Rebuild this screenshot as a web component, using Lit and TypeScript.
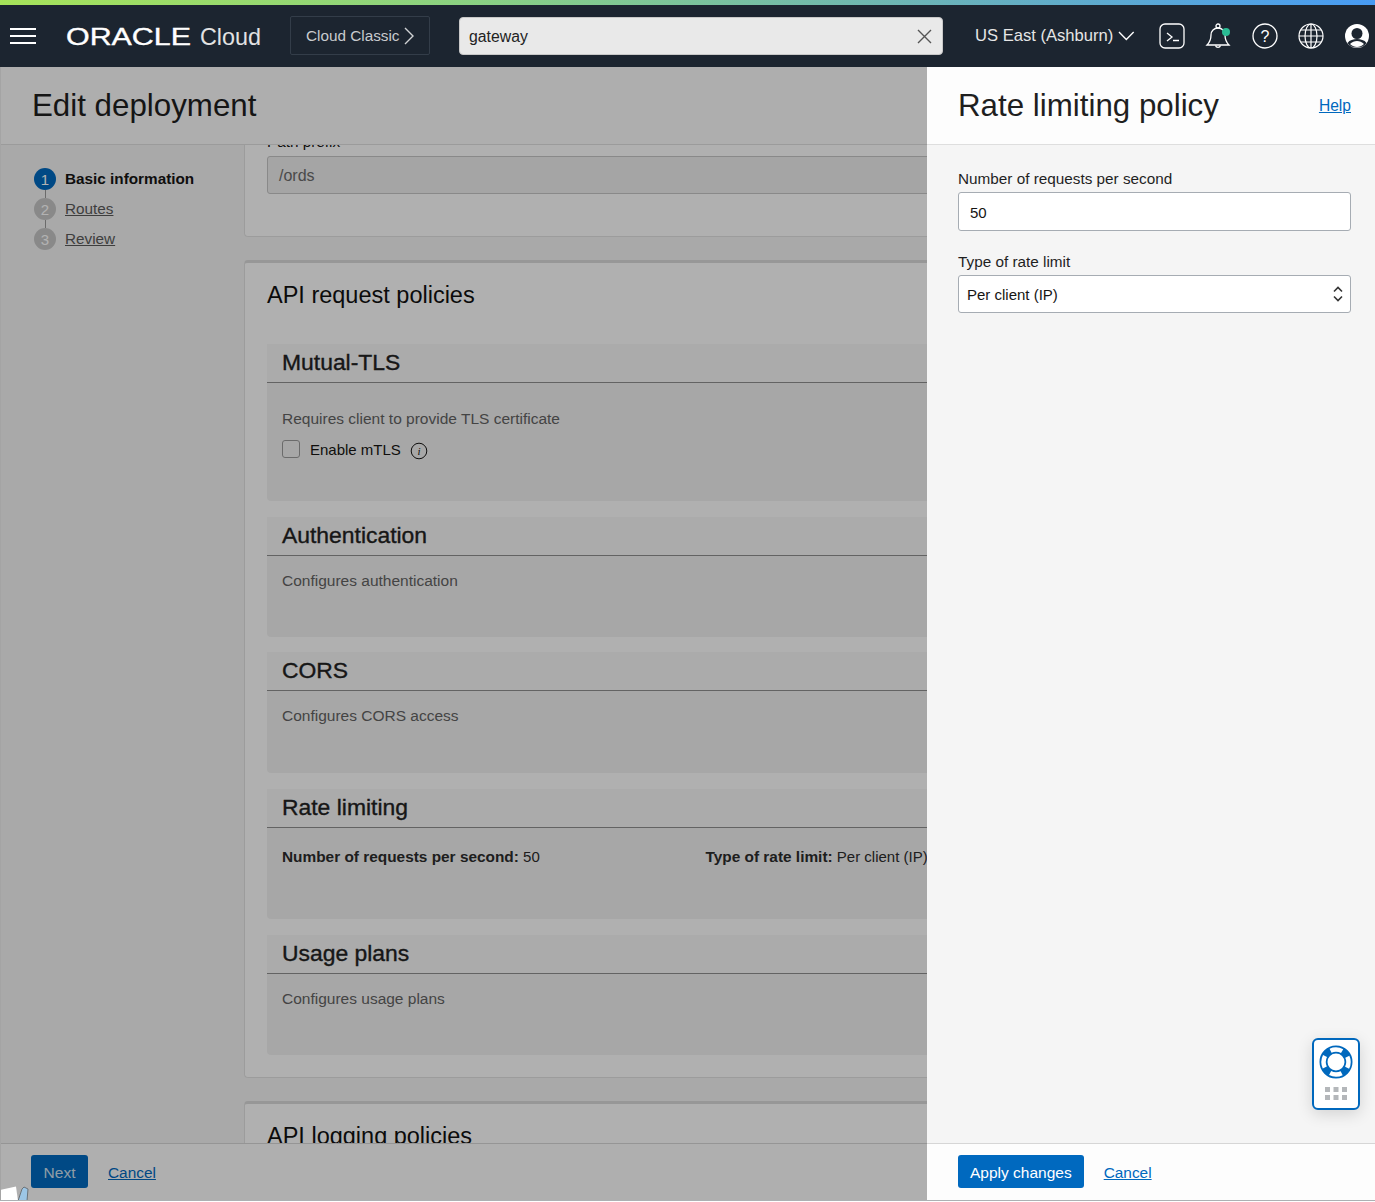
import { LitElement, css, html } from "lit";
import { customElement } from "lit/decorators.js";

const FONT = css`"Liberation Sans", Arial, sans-serif`;

const sections = [
  { title: "Authentication", text: "Configures authentication", cls: "" },
  { title: "CORS", text: "Configures CORS access", cls: "tall" },
];

@customElement("app-root")
export class AppRoot extends LitElement {
  static styles = css`
    :host {
      display: block;
      width: 1375px;
      height: 1202px;
      overflow: hidden;
      font-family: ${FONT};
      font-size: 15.3px;
      color: #161513;
      background: #fff;
    }
    * {
      box-sizing: border-box;
    }
    a {
      color: #0068bd;
      text-decoration: underline;
    }

    /* top bar */
    .stripe {
      height: 5px;
      background: linear-gradient(90deg, #a6e35a 0%, #8ad183 35%, #6db5b5 66%, #479bf4 100%);
    }
    .topbar {
      height: 62px;
      background: #1c2530;
      display: flex;
      align-items: center;
      color: #e6e6e6;
    }
    .burger {
      width: 26px;
      height: 16px;
      margin-left: 10px;
      display: flex;
      flex-direction: column;
      justify-content: space-between;
    }
    .burger i {
      display: block;
      height: 2px;
      background: #fff;
    }
    .logo {
      margin-left: 30px;
      width: 200px;
      height: 30px;
      display: block;
      flex: none;
    }
    .logo .mark {
      stroke: #fff;
      stroke-width: 0.35px;
    }
    .classic {
      margin-left: 24px;
      width: 140px;
      height: 39px;
      margin-top: -1px;
      border: 1px solid #333d49;
      border-radius: 2px;
      display: flex;
      align-items: center;
      padding-left: 15px;
      gap: 4px;
      color: #c9cbce;
      font-size: 15.3px;
    }
    .search {
      margin-left: 29px;
      width: 484px;
      height: 38px;
      background: #e9e9e9;
      border: 1px solid #c8c8c8;
      border-radius: 4px;
      display: flex;
      align-items: center;
      justify-content: space-between;
      padding: 1px 9px 0;
      color: #222;
      font-size: 15.8px;
    }
    .region {
      margin-left: 32px;
      width: 160px;
      display: flex;
      align-items: center;
      gap: 5px;
      font-size: 16.6px;
      white-space: nowrap;
    }
    .icons {
      margin-left: 24px;
      display: flex;
      align-items: center;
      gap: 20.25px;
    }
    .icons svg {
      display: block;
      width: 26px;
      height: 28px;
    }
    .icons text {
      font-family: ${FONT};
      font-size: 16px;
      fill: #fff;
    }

    /* page */
    .page {
      display: flex;
      height: 1134px;
      border-bottom: 1px solid #adb0b3;
    }
    .left {
      position: relative;
      width: 927px;
      flex: none;
      overflow: hidden;
      display: flex;
      flex-direction: column;
      background: #f3f3f3;
      border-left: 1px solid #a4a4a4;
    }
    .dim {
      position: absolute;
      inset: 0;
      background: rgba(0, 0, 0, 0.3);
    }
    .title-bar {
      height: 78px;
      flex: none;
      background: #f9f9f9;
      border-bottom: 1px solid #dedede;
      display: flex;
      align-items: center;
      padding-left: 31px;
    }
    h1 {
      margin: 0;
      font-size: 31.3px;
      font-weight: 400;
      color: #1f1f1f;
    }
    .middle {
      flex: 1;
      display: flex;
      min-height: 0;
      overflow: hidden;
    }
    .steps {
      width: 243px;
      flex: none;
      padding: 23px 0 0 33px;
    }
    .step {
      display: flex;
      align-items: center;
      gap: 9px;
      height: 22px;
    }
    .num {
      width: 22px;
      height: 22px;
      border-radius: 50%;
      background: #c5c5c5;
      color: #fff;
      display: flex;
      align-items: center;
      justify-content: center;
      font-size: 15px;
    }
    .step.on .num {
      background: #0069bf;
    }
    .step.on b {
      color: #161513;
    }
    .step a {
      color: #5a5a5a;
    }
    .step b,
    .step a {
      margin-top: -1px;
    }
    .link {
      width: 1px;
      height: 8px;
      margin-left: 11px;
      background: #9a9a9a;
    }
    .scroller {
      flex: none;
      width: 1040px;
      margin-top: -13px;
    }
    .card {
      background: #fdfdfd;
      border: 1px solid #e0e0e0;
      border-radius: 4px;
      border-right: 0;
      padding: 0 0 22px 22px;
      margin-bottom: 23px;
    }
    .card.first {
      border-top: 0;
      border-radius: 0 0 4px 4px;
      height: 105px;
      padding-bottom: 0;
    }
    .card.policies {
      border-top: 3px solid #d8d8d8;
      height: 818px;
      padding-bottom: 0;
    }
    .card.last {
      border-top: 3px solid #d8d8d8;
    }
    .card h2 {
      margin: 0;
      height: 81px;
      padding-top: 16px;
      line-height: 32px;
      font-size: 23.5px;
      font-weight: 400;
      color: #111;
    }
    .lbl {
      line-height: 20px;
      margin-bottom: 4px;
      color: #161513;
    }
    .ro {
      height: 38px;
      background: #ececec;
      border: 1px solid #c4c4c4;
      border-radius: 3px;
      display: flex;
      align-items: center;
      padding: 2px 0 0 11px;
      font-size: 16px;
      color: #6a6a6a;
    }
    .section {
      background: #f0f0f0;
      border-radius: 4px;
      margin-bottom: 15.5px;
    }
    .section h3 {
      margin: 0;
      height: 39px;
      padding-left: 15px;
      line-height: 37px;
      font-size: 22.9px;
      font-weight: 400;
      -webkit-text-stroke: 0.35px #222;
      color: #222;
      background: #f5f5f5;
      border-bottom: 1px solid #8e8e8e;
    }
    .section p {
      margin: 0;
      line-height: 20px;
      font-size: 15.5px;
      color: #626262;
    }
    .body {
      padding: 15px 15px 0;
      height: 81px;
    }
    .body.tall {
      height: 82px;
    }
    .body.mtls {
      height: 118px;
      padding-top: 26px;
    }
    .body.rate {
      height: 91.5px;
      padding-top: 19px;
      display: grid;
      grid-template-columns: 423.5px 1fr;
      line-height: 20px;
      font-size: 15px;
      color: #2b2b2b;
      align-content: start;
    }
    .body.rate b {
      font-size: 15.4px;
    }
    .check {
      display: flex;
      align-items: center;
      margin-top: 10px;
      height: 20px;
      font-size: 15px;
    }
    .box {
      width: 18px;
      height: 18px;
      border: 1px solid #9a9a9a;
      border-radius: 3px;
      margin-right: 10px;
    }
    .check svg {
      margin: 3px 0 0 9px;
      display: block;
    }
    .check text {
      font-family: "Liberation Serif", serif;
      font-style: italic;
      font-size: 11px;
      fill: #161513;
    }
    .foot {
      height: 57px;
      flex: none;
      border-top: 1px solid #d6d6d6;
      background: #fbfbfb;
      display: flex;
      align-items: center;
      padding: 0 0 0 30px;
      gap: 20px;
    }
    .btn {
      height: 33px;
      margin-top: -1px;
      border: 0;
      border-radius: 3px;
      background: #0069bf;
      color: #fff;
      font: inherit;
      font-size: 15.5px;
      padding: 2px 12px 0;
    }
    .btn.next {
      width: 57px;
      padding: 2px 0 0;
      color: #cfe0ee;
    }
    .foot a {
      font-size: 15.4px;
      margin-top: 1px;
    }
    .sticker {
      position: absolute;
      left: -1px;
      bottom: -1px;
      display: block;
    }

    /* drawer */
    .drawer {
      position: relative;
      flex: 1;
      display: flex;
      flex-direction: column;
      background: #f5f5f5;
    }
    .drawer .title-bar {
      background: #fdfdfd;
      justify-content: space-between;
      padding: 0 24px 0 31px;
    }
    .drawer .title-bar a {
      font-size: 15.6px;
      margin-top: 1px;
    }
    .form {
      flex: 1;
      padding: 24px 24px 0 31px;
    }
    .form label {
      display: block;
      line-height: 20px;
      margin-bottom: 3px;
      color: #1f1f1f;
    }
    .form input,
    .form select {
      display: block;
      width: 100%;
      background: #fff;
      border: 1px solid #a6acb3;
      border-radius: 3px;
      font: inherit;
      font-size: 15px;
      color: #161513;
      outline: 0;
      appearance: none;
    }
    .form input {
      height: 39px;
      padding: 1px 11px 0;
      margin-bottom: 21px;
    }
    .form select {
      height: 38px;
      padding: 0 8px;
    }
    .pick {
      position: relative;
    }
    .pick svg {
      position: absolute;
      right: 7px;
      top: 10px;
      display: block;
    }
    .drawer .foot {
      background: #fdfdfd;
      padding-left: 31px;
    }
    .help {
      position: absolute;
      left: 385px;
      top: 971px;
      width: 48px;
      height: 72px;
      background: #fff;
      border: 2px solid #0068bd;
      border-radius: 6px;
      box-shadow: 0 4px 16px rgba(0, 0, 0, 0.14);
    }
    .help svg {
      display: block;
    }
  `;

  private chevron(d: string, w: number, h: number, color: string, sw = 1.4) {
    return html`<svg width=${w} height=${h} viewBox="0 0 ${w} ${h}" fill="none">
      <path d=${d} stroke=${color} stroke-width=${sw} />
    </svg>`;
  }

  private headerIcons() {
    return html`<div class="icons">
      <svg viewBox="0 0 26 28" fill="none" stroke="#fff" stroke-width="1.3">
        <rect x="1" y="2" width="24" height="24" rx="5" />
        <path d="M8 11l5 4-5 4M14 18.500h6" />
      </svg>
      <svg viewBox="0 0 26 28" fill="none" stroke="#fff" stroke-width="1.3">
        <path d="M2 23c3-3 4-6 4-10 0-4 3-7 7-7s7 3 7 7c0 4 1 7 4 10z" />
        <circle cx="13" cy="4" r="2" />
        <path d="M10.500 23.500a2.600 2.600 0 0 0 5 0" />
        <circle cx="21" cy="10" r="4" fill="#2abb94" stroke="none" />
      </svg>
      <svg viewBox="0 0 26 28" fill="none" stroke="#fff" stroke-width="1.3">
        <circle cx="13" cy="14" r="12" />
        <text x="13" y="20" text-anchor="middle" stroke="none">?</text>
      </svg>
      <svg viewBox="0 0 26 28" fill="none" stroke="#fff" stroke-width="1.2">
        <circle cx="13" cy="14" r="12" />
        <ellipse cx="13" cy="14" rx="6" ry="12" />
        <path d="M13 2v24M1 14h24M3 8h20M3 20h20" />
      </svg>
      <svg viewBox="0 0 26 28" fill="none">
        <circle cx="13" cy="14" r="12" fill="#fff" />
        <circle cx="13" cy="11.500" r="5.500" fill="#1c2530" />
        <path d="M3.500 21c2-3 6-4 9.500-4s7.500 1 9.500 4c-2 3-5.500 4.500-9.500 4.500S5.500 24 3.500 21z" fill="#1c2530" />
        <path d="M6 22c2-2 4.500-3 7-3s5 1 7 3c-2 2-4.500 3-7 3s-5-1-7-3z" fill="#fff" />
      </svg>
    </div>`;
  }

  private lifebuoy() {
    return html`<svg width="44" height="68" viewBox="0 0 44 68">
      <g fill="none" transform="translate(-2 -2)">
        <circle cx="24" cy="24" r="12.500" stroke="#0068bd" stroke-width="8" />
        <circle
          cx="24"
          cy="24"
          r="12.500"
          stroke="#fff"
          stroke-width="4.500"
          stroke-dasharray="12 7.635"
          stroke-dashoffset="6"
        />
      </g>
      <g fill="#b4b7ba">
        <rect x="11" y="47" width="5" height="5" />
        <rect x="19.500" y="47" width="5" height="5" />
        <rect x="28" y="47" width="5" height="5" />
        <rect x="11" y="55" width="5" height="5" />
        <rect x="19.500" y="55" width="5" height="5" />
        <rect x="28" y="55" width="5" height="5" />
      </g>
    </svg>`;
  }

  render() {
    return html`
      <div class="stripe"></div>
      <header class="topbar">
        <div class="burger"><i></i><i></i><i></i></div>
        <svg class="logo" viewBox="0 0 200 30">
          <text
            class="mark"
            x="0"
            y="24"
            textLength="125"
            lengthAdjust="spacingAndGlyphs"
            font-family="Liberation Sans"
            font-size="23"
            fill="#fff"
            >ORACLE</text
          >
          <text x="134" y="24" textLength="61" lengthAdjust="spacingAndGlyphs" font-family="Liberation Sans" font-size="24" fill="#e2e2e2"
            >Cloud</text
          >
        </svg>
        <div class="classic">
          Cloud Classic ${this.chevron("M1 1l8 8-8 8", 10, 18, "#d0d2d4")}
        </div>
        <div class="search">
          gateway ${this.chevron("M2 2l13 13M15 2L2 15", 17, 17, "#555")}
        </div>
        <div class="region">
          US East (Ashburn) ${this.chevron("M1 1l7.500 7.500L16 1", 17, 10, "#fff")}
        </div>
        ${this.headerIcons()}
      </header>

      <div class="page">
        <div class="left">
          <div class="title-bar"><h1>Edit deployment</h1></div>
          <div class="middle">
            <nav class="steps">
              <div class="step on"><span class="num">1</span><b>Basic information</b></div>
              <div class="link"></div>
              <div class="step"><span class="num">2</span><a href="#">Routes</a></div>
              <div class="link"></div>
              <div class="step"><span class="num">3</span><a href="#">Review</a></div>
            </nav>
            <div class="scroller">
              <div class="card first">
                <div class="lbl">Path prefix</div>
                <div class="ro">/ords</div>
              </div>
              <div class="card policies">
                <h2>API request policies</h2>
                <div class="section">
                  <h3>Mutual-TLS</h3>
                  <div class="body mtls">
                    <p>Requires client to provide TLS certificate</p>
                    <div class="check">
                      <span class="box"></span>Enable mTLS
                      <svg width="18" height="18" viewBox="0 0 18 18" fill="none">
                        <circle cx="9" cy="9" r="7.800" stroke="#161513" />
                        <text x="9" y="13" text-anchor="middle">i</text>
                      </svg>
                    </div>
                  </div>
                </div>
                ${sections.map(
                  (s) => html`<div class="section">
                    <h3>${s.title}</h3>
                    <div class="body ${s.cls}"><p>${s.text}</p></div>
                  </div>`
                )}
                <div class="section">
                  <h3>Rate limiting</h3>
                  <div class="body rate">
                    <div><b>Number of requests per second:</b> 50</div>
                    <div><b>Type of rate limit:</b> Per client (IP)</div>
                  </div>
                </div>
                <div class="section">
                  <h3>Usage plans</h3>
                  <div class="body"><p>Configures usage plans</p></div>
                </div>
              </div>
              <div class="card last">
                <h2>API logging policies</h2>
              </div>
            </div>
          </div>
          <div class="foot">
            <button class="btn next">Next</button>
            <a href="#">Cancel</a>
          </div>
          <div class="dim"></div>
          <svg class="sticker" width="32" height="16" viewBox="0 0 32 16">
            <path d="M0 5L16 1.500l2 14.500H0z" fill="#fff" />
            <path d="M18 16L22 4l2-2 4 2-1 12z" fill="#9cc6e6" stroke="#6a7278" stroke-width="1" />
          </svg>
        </div>

        <aside class="drawer">
          <div class="title-bar">
            <h1>Rate limiting policy</h1>
            <a href="#">Help</a>
          </div>
          <div class="form">
            <label for="rps">Number of requests per second</label>
            <input id="rps" .value=${"50"} />
            <label for="type">Type of rate limit</label>
            <div class="pick">
              <select id="type"><option>Per client (IP)</option></select>
              <svg width="12" height="18" viewBox="0 0 12 18" fill="none">
                <path d="M2 6.500l4-4 4 4M2 11.500l4 4 4-4" stroke="#333" stroke-width="1.600" />
              </svg>
            </div>
          </div>
          <div class="foot">
            <button class="btn">Apply changes</button>
            <a href="#">Cancel</a>
          </div>
          <div class="help">${this.lifebuoy()}</div>
        </aside>
      </div>
    `;
  }
}

declare global {
  interface HTMLElementTagNameMap {
    "app-root": AppRoot;
  }
}
